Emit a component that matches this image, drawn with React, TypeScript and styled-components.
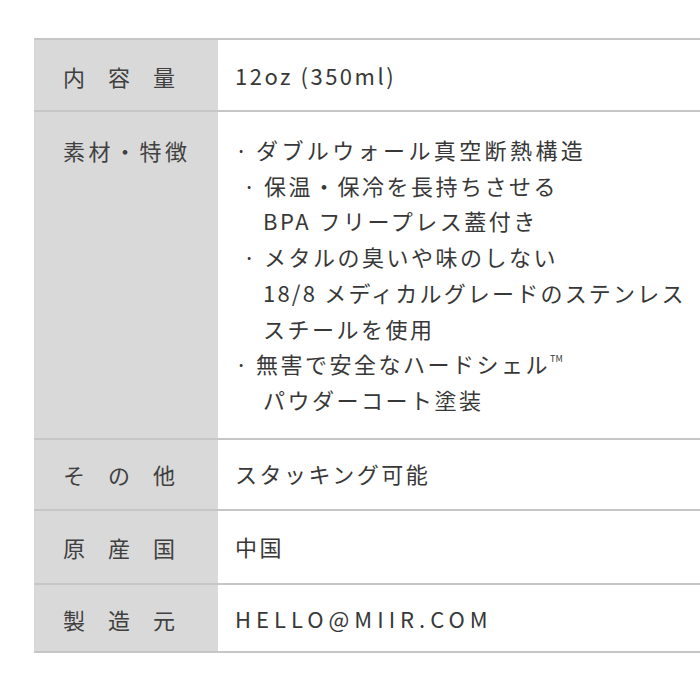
import React from "react";
import styled, { createGlobalStyle } from "styled-components";

const Global = createGlobalStyle`
  html, body { margin: 0; padding: 0; background: #ffffff; }
  body { font-family: "Noto Sans CJK JP", "Noto Sans", sans-serif; color: #3b3b3b; }
`;

const Page = styled.div`
  width: 700px;
  height: 700px;
  overflow: hidden;
  padding: 38px 0 0 34px;
  box-sizing: border-box;
`;

const Table = styled.div`
  width: 700px;
  border-top: 2px solid #c6c6c6;
`;

const Row = styled.div`
  display: grid;
  grid-template-columns: 184px 1fr;
  border-bottom: 2px solid #c6c6c6;
`;

const Label = styled.div<{ $pt: number; $pb: number; $spread: number }>`
  background: #d9d9d9;
  padding: ${(p) => p.$pt}px 0 ${(p) => p.$pb}px 29px;
  font-size: 22px;
  line-height: 36px;
  letter-spacing: ${(p) => p.$spread}px;
  color: #404040;
  white-space: nowrap;
`;

const Value = styled.div<{ $pt: number; $pb: number; $spacing?: number }>`
  padding: ${(p) => p.$pt}px 0 ${(p) => p.$pb}px 17px;
  font-size: 22px;
  line-height: 35.7px;
  letter-spacing: ${(p) => p.$spacing ?? 2.5}px;
  color: #383838;
  white-space: nowrap;
`;

const Line = styled.div<{ $indent: number; $spacing?: number }>`
  display: flex;
  padding-left: ${(p) => p.$indent}px;
  letter-spacing: ${(p) => p.$spacing ?? 2.5}px;
`;

const Bullet = styled.span`
  display: inline-block;
  width: 21px;
  flex: none;
`;

const Tm = styled.sup`
  font-size: 9px;
  letter-spacing: 0;
  vertical-align: top;
  line-height: 26px;
`;

const features: { indent: number; bullet: boolean; spacing?: number; text: React.ReactNode }[] = [
  { indent: 0, bullet: true, spacing: 3.4, text: "ダブルウォール真空断熱構造" },
  { indent: 8, bullet: true, text: "保温・保冷を長持ちさせる" },
  { indent: 28, bullet: false, text: "BPA フリープレス蓋付き" },
  { indent: 8, bullet: true, text: "メタルの臭いや味のしない" },
  { indent: 28, bullet: false, spacing: 2.2, text: "18/8 メディカルグレードのステンレス" },
  { indent: 28, bullet: false, text: "スチールを使用" },
  {
    indent: 0,
    bullet: true,
    text: (
      <>
        無害で安全なハードシェル<Tm>TM</Tm>
      </>
    ),
  },
  { indent: 28, bullet: false, text: "パウダーコート塗装" },
];

export default function App() {
  return (
    <Page>
      <Global />
      <Table>
        <Row>
          <Label $pt={18} $pb={16} $spread={23}>内容量</Label>
          <Value $pt={18} $pb={16}>12oz (350ml)</Value>
        </Row>
        <Row>
          <Label $pt={20} $pb={18} $spread={3.5}>素材・特徴</Label>
          <Value $pt={20} $pb={20}>
            {features.map((f, i) => (
              <Line key={i} $indent={f.indent} $spacing={f.spacing}>
                {f.bullet && <Bullet>·</Bullet>}
                <span>{f.text}</span>
              </Line>
            ))}
          </Value>
        </Row>
        <Row>
          <Label $pt={16} $pb={17} $spread={23}>その他</Label>
          <Value $pt={16} $pb={17}>スタッキング可能</Value>
        </Row>
        <Row>
          <Label $pt={18} $pb={18} $spread={23}>原産国</Label>
          <Value $pt={18} $pb={18}>中国</Value>
        </Row>
        <Row>
          <Label $pt={16} $pb={14} $spread={23}>製造元</Label>
          <Value $pt={16} $pb={14} $spacing={5}>HELLO@MIIR.COM</Value>
        </Row>
      </Table>
    </Page>
  );
}
